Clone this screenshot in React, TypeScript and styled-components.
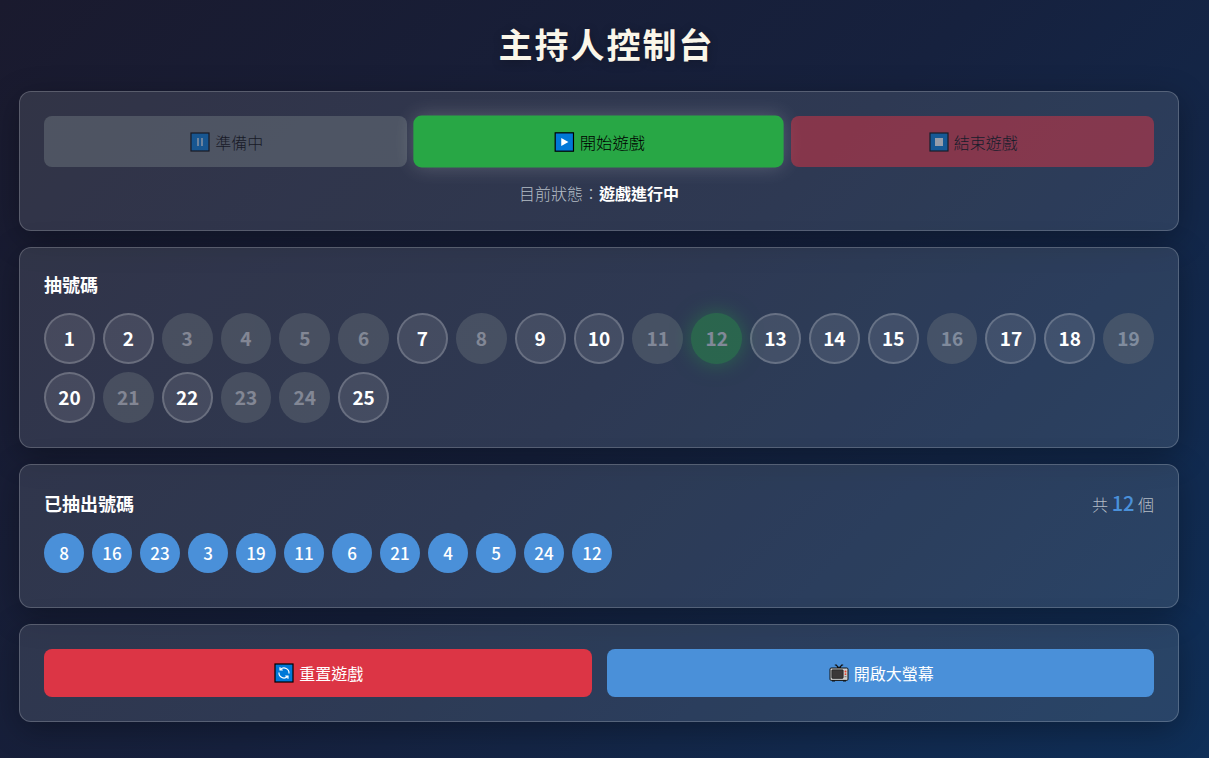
import React from 'react';
import styled, { createGlobalStyle, css } from 'styled-components';

const GlobalStyle = createGlobalStyle`
  *, *::before, *::after { box-sizing: border-box; }
  body {
    margin: 0;
    min-height: 100vh;
    background: linear-gradient(135deg, #1a1a2e 0%, #16213e 50%, #0f2f58 100%) fixed;
    color: #fff;
    font-family: 'Noto Sans CJK TC', sans-serif;
    font-size: 16px;
    line-height: 24px;
  }
  button { font-family: inherit; }
`;

const Header = styled.header`
  padding: 18px 20px 21px;
  text-align: center;
`;

const Title = styled.h1`
  margin: 0;
  color: #faf6e9;
  font-size: 34px;
  line-height: 52px;
  letter-spacing: 2px;
  text-indent: 4px;
  text-shadow: 0 2px 10px rgba(0, 0, 0, 0.3);
`;

const Main = styled.main`
  display: flex;
  flex-direction: column;
  gap: 16px;
  padding: 0 30px 36px 19px;
`;

const Card = styled.section`
  padding: 24px;
  border: 1px solid rgba(255, 255, 255, 0.2);
  border-radius: 12px;
  background: rgba(250, 252, 255, 0.11);
  box-shadow: 0 8px 32px rgba(0, 0, 0, 0.3);
`;

const StateGrid = styled.div`
  display: grid;
  grid-template-columns: repeat(3, 1fr);
  gap: 10px;
`;

const ActionGrid = styled.div`
  display: grid;
  grid-template-columns: repeat(2, 1fr);
  gap: 15px;
`;

const Button = styled.button`
  display: flex;
  align-items: center;
  justify-content: center;
  gap: 5px;
  height: 48px;
  padding: 0 14px 0 16px;
  border: 0;
  border-radius: 8px;
  font-size: 16px;
  line-height: 24px;
  cursor: pointer;
`;

const tones = { idle: '#6c757d', start: '#28a745', stop: '#dc3545', open: '#4a90d9' };
type Tone = keyof typeof tones;

const StateButton = styled(Button)<{ $tone: Tone; $active?: boolean }>`
  height: 51px;
  background: ${(p) => tones[p.$tone]};
  color: #000;
  font-weight: 300;
  opacity: 0.5;
  ${(p) =>
    p.$active &&
    css`
      opacity: 1;
      transform: scale(1.02);
      box-shadow: 0 0 20px rgba(255, 255, 255, 0.2);
    `}
`;

const ActionButton = styled(Button)<{ $tone: Tone }>`
  background: ${(p) => tones[p.$tone]};
  color: #fff;
`;

const Status = styled.p`
  margin: 14px 0 1px;
  color: #b4bdc6;
  font-weight: 300;
  text-align: center;

  strong { color: #fff; font-weight: 700; }
`;

const Heading = styled.h2`
  margin: 0;
  font-size: 18px;
  line-height: 25px;
`;

const NumberGrid = styled.div`
  display: grid;
  grid-template-columns: repeat(auto-fill, minmax(50px, 1fr));
  gap: 8px;
  margin-top: 16px;
`;

const NumberButton = styled.button<{ $latest: boolean }>`
  aspect-ratio: 1;
  padding: 0;
  border: 2px solid rgba(255, 255, 255, 0.2);
  border-radius: 50%;
  background: rgba(255, 255, 255, 0.1);
  color: #fff;
  font-size: 19px;
  line-height: 24px;
  font-weight: 700;
  cursor: pointer;

  &:disabled {
    border: 0;
    background: #6c757d;
    opacity: 0.4;
    cursor: not-allowed;
  }

  ${(p) =>
    p.$latest &&
    css`
      &&:disabled {
        background: #28a745;
        box-shadow: 0 0 20px #28a745;
      }
    `}
`;

const DrawnHeader = styled.div`
  display: flex;
  align-items: center;
  justify-content: space-between;
  height: 30px;
  margin-bottom: 14px;
`;

const Count = styled.span`
  color: #b4bdc6;
  font-weight: 300;

  b {
    color: #4a90d9;
    font-size: 20px;
    font-weight: 500;
  }
`;

const DrawnList = styled.ul`
  display: flex;
  flex-wrap: wrap;
  gap: 8px;
  min-height: 50px;
  margin: 0;
  padding: 0;
  list-style: none;
`;

const Drawn = styled.li`
  display: flex;
  align-items: center;
  justify-content: center;
  width: 40px;
  height: 40px;
  border-radius: 50%;
  background: #4a90d9;
  font-size: 17px;
  font-weight: 500;
`;

const Icon = styled.svg`
  flex: none;
  width: 20px;
  height: 20px;
`;

const Tile = ({ children }: { children: React.ReactNode }) => (
  <Icon viewBox="0 0 20 20" aria-hidden="true">
    <rect x="1" y="1" width="18" height="18" fill="#0078d7" stroke="#000" strokeWidth="1.2" />
    {children}
  </Icon>
);

const PauseIcon = () => (
  <Tile><path d="M8 6v8M12 6v8" stroke="#fff" strokeWidth="1.3" /></Tile>
);
const PlayIcon = () => (
  <Tile><path d="M7 6l7 4-7 4z" fill="#fff" /></Tile>
);
const StopIcon = () => (
  <Tile><rect x="6" y="6" width="8" height="8" fill="#fff" /></Tile>
);
const ResetIcon = () => (
  <Tile>
    <path
      d="M6.5 6.5A5 5 0 0 1 15 10.5M13.5 13.5A5 5 0 0 1 5 9.5M6 4.2v2.8h2.8M14 15.8v-2.8h-2.8"
      fill="none" stroke="#fff" strokeWidth="1.2"
    />
  </Tile>
);
const TvIcon = () => (
  <Icon viewBox="0 0 20 20" aria-hidden="true">
    <path d="M7 2l3 3 3-3M5.8 2h2M12.2 2h2M8 4.6h4" fill="none" stroke="#111" strokeWidth="1.2" />
    <rect x="1" y="5" width="18" height="12.4" rx="1.2" fill="#ccc" stroke="#111" strokeWidth="1" />
    <rect x="2.8" y="6.8" width="11.4" height="8.6" rx=".8" fill="#3b3838" stroke="#111" strokeWidth=".6" />
    <path d="M3 18h3M14 18h3" stroke="#111" strokeWidth="1" />
    <circle cx="16.5" cy="8.4" r="1" fill="#e8412c" />
    <circle cx="16.5" cy="11.2" r=".9" fill="#e8412c" />
    <path d="M15.5 13.7h2" stroke="#777" />
  </Icon>
);

const drawn = [8, 16, 23, 3, 19, 11, 6, 21, 4, 5, 24, 12];
const numbers = Array.from({ length: 25 }, (_, i) => i + 1);
const latest = drawn[drawn.length - 1];

export default function App() {
  return (
    <>
      <GlobalStyle />
      <Header><Title>主持人控制台</Title></Header>
      <Main>
        <Card>
          <StateGrid>
            <StateButton type="button" $tone="idle"><PauseIcon />準備中</StateButton>
            <StateButton type="button" $tone="start" $active><PlayIcon />開始遊戲</StateButton>
            <StateButton type="button" $tone="stop"><StopIcon />結束遊戲</StateButton>
          </StateGrid>
          <Status>目前狀態：<strong>遊戲進行中</strong></Status>
        </Card>
        <Card>
          <Heading>抽號碼</Heading>
          <NumberGrid>
            {numbers.map((n) => (
              <NumberButton key={n} type="button" disabled={drawn.includes(n)} $latest={n === latest}>
                {n}
              </NumberButton>
            ))}
          </NumberGrid>
        </Card>
        <Card>
          <DrawnHeader>
            <Heading>已抽出號碼</Heading>
            <Count>共 <b>{drawn.length}</b> 個</Count>
          </DrawnHeader>
          <DrawnList>
            {drawn.map((n) => <Drawn key={n}>{n}</Drawn>)}
          </DrawnList>
        </Card>
        <Card>
          <ActionGrid>
            <ActionButton type="button" $tone="stop"><ResetIcon />重置遊戲</ActionButton>
            <ActionButton type="button" $tone="open"><TvIcon />開啟大螢幕</ActionButton>
          </ActionGrid>
        </Card>
      </Main>
    </>
  );
}
